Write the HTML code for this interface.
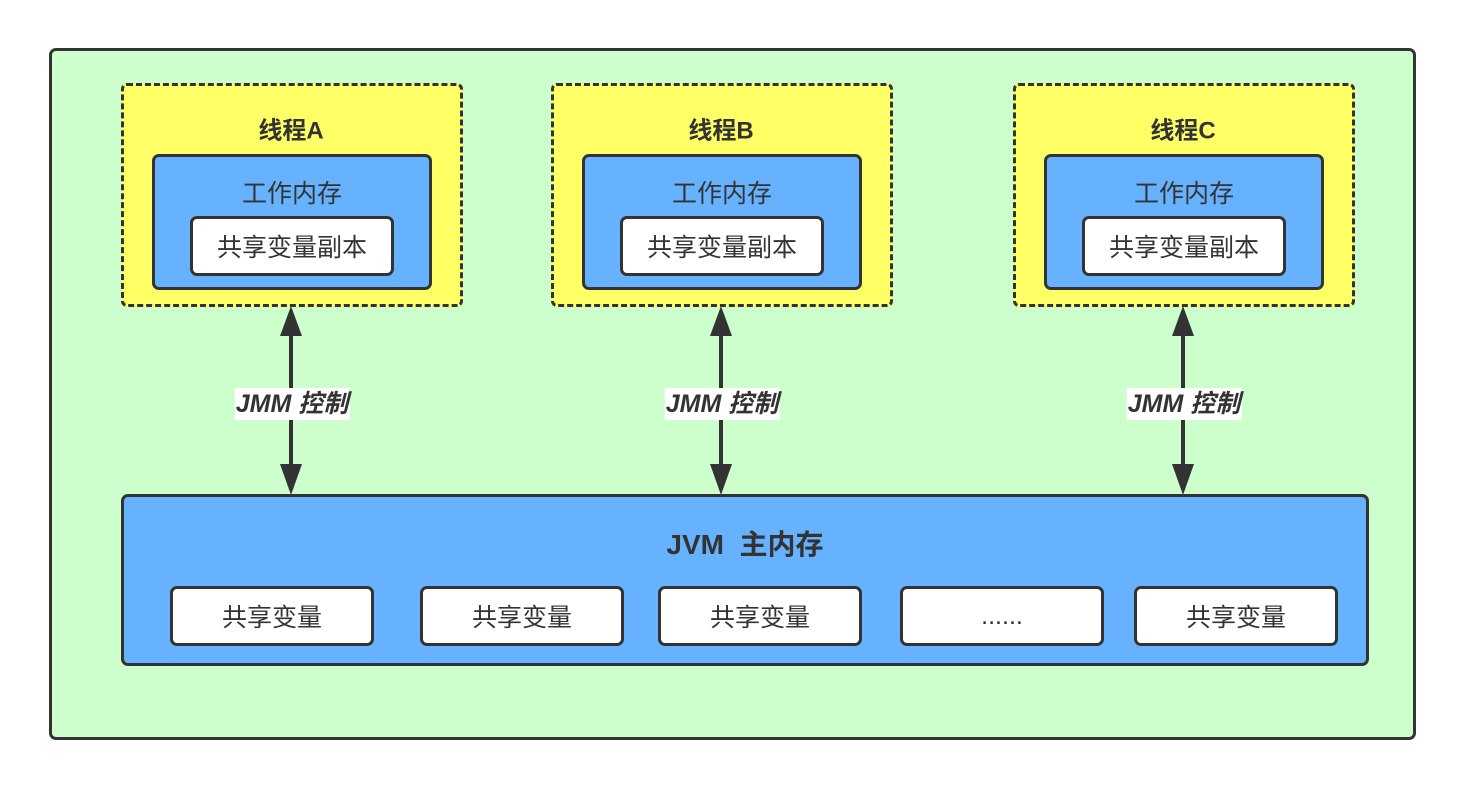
<!DOCTYPE html><html><head><meta charset="utf-8"><style>
body{margin:0;width:1464px;height:788px;background:#fff;position:relative;overflow:hidden;font-family:"Liberation Sans","Noto Sans CJK SC",sans-serif;color:#333}
.a{position:absolute;box-sizing:border-box;display:flex;align-items:center;justify-content:center}
.th{border:3px dashed #333;background:#ffff66;border-radius:6px}
.bl{border:3px solid #333;background:#66b2ff;border-radius:7px}
.wh{border:3px solid #333;background:#fff;border-radius:7px;font-size:25px}
.t{position:absolute;font-size:25px;white-space:nowrap;transform:translate(-50%,-50%)}
.b{font-weight:bold}
.lab{position:absolute;background:#fff;font-style:italic;font-weight:bold;font-size:25px;transform:translate(-50%,-50%);padding:0 1px;line-height:32px}
</style></head><body>
<div class="a" style="left:49px;top:48px;width:1367px;height:692px;border:3px solid #333;border-radius:7px;background:#ccffcc"></div>

<div class="a th" style="left:121px;top:83px;width:342px;height:224px"></div>
<div class="a th" style="left:551px;top:83px;width:342px;height:224px"></div>
<div class="a th" style="left:1013px;top:83px;width:342px;height:224px"></div>
<div class="t b" style="left:291px;top:128px;font-size:24px">线程A</div>
<div class="t b" style="left:721px;top:128px;font-size:24px">线程B</div>
<div class="t b" style="left:1183px;top:128px;font-size:24px">线程C</div>

<div class="a bl" style="left:152px;top:154px;width:280px;height:136px"></div>
<div class="a bl" style="left:582px;top:154px;width:280px;height:136px"></div>
<div class="a bl" style="left:1044px;top:154px;width:280px;height:136px"></div>
<div class="t" style="left:292px;top:192px">工作内存</div>
<div class="t" style="left:722px;top:192px">工作内存</div>
<div class="t" style="left:1184px;top:192px">工作内存</div>
<div class="a wh" style="left:190px;top:216px;width:204px;height:60px">共享变量副本</div>
<div class="a wh" style="left:620px;top:216px;width:204px;height:60px">共享变量副本</div>
<div class="a wh" style="left:1082px;top:216px;width:204px;height:60px">共享变量副本</div>

<svg style="position:absolute;left:0;top:0" width="1464" height="788">
<g fill="#333" stroke="#333" stroke-width="4">
<line x1="291" y1="325" x2="291" y2="475"/><line x1="721" y1="325" x2="721" y2="475"/><line x1="1183" y1="325" x2="1183" y2="475"/>
</g>
<g fill="#333">
<polygon points="291,306 280,336 302,336"/><polygon points="291,495 280,464 302,464"/>
<polygon points="721,306 710,336 732,336"/><polygon points="721,495 710,464 732,464"/>
<polygon points="1183,306 1172,336 1194,336"/><polygon points="1183,495 1172,464 1194,464"/>
</g></svg>
<div class="lab" style="left:292px;top:404px">JMM 控制</div>
<div class="lab" style="left:722px;top:404px">JMM 控制</div>
<div class="lab" style="left:1184px;top:404px">JMM 控制</div>

<div class="a bl" style="left:121px;top:494px;width:1248px;height:172px"></div>
<div class="t b" style="left:745px;top:543px;font-size:28px">JVM&nbsp;&nbsp;主内存</div>
<div class="a wh" style="left:170px;top:586px;width:204px;height:60px">共享变量</div>
<div class="a wh" style="left:420px;top:586px;width:204px;height:60px">共享变量</div>
<div class="a wh" style="left:658px;top:586px;width:204px;height:60px">共享变量</div>
<div class="a wh" style="left:900px;top:586px;width:204px;height:60px">......</div>
<div class="a wh" style="left:1134px;top:586px;width:204px;height:60px">共享变量</div>
</body></html>
